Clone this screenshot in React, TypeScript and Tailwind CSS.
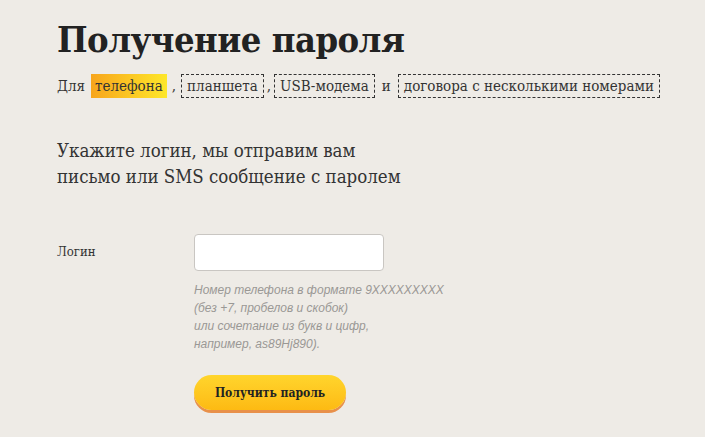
export default function App() {
  return (
    <div className="w-[705px] h-[437px] overflow-hidden bg-[#eeebe6] text-[#333] [font-family:'DejaVu_Serif_Condensed','DejaVu_Serif',serif]">
      <div className="pl-[57px] pt-[16px]">
        <h1 className="text-[36px] leading-[46px] font-bold text-[#222] tracking-[-0.5px]">Получение пароля</h1>

        <div className="mt-[12px] flex items-center text-[15px] text-[#333]">
          <span className="mr-[6px]">Для</span>
          <span className="h-[24px] px-[4px] flex items-center bg-gradient-to-r from-[#f7a51c] to-[#fde72a]">телефона</span>
          <span className="mx-[5px]">,</span>
          <span className="h-[24px] px-[5px] flex items-center border border-dashed border-[#333]">планшета</span>
          <span className="mx-[3px]">,</span>
          <span className="h-[24px] px-[5px] flex items-center border border-dashed border-[#333]">USB-модема</span>
          <span className="mx-[7px]">и</span>
          <span className="h-[24px] px-[5px] flex items-center border border-dashed border-[#333]">договора с несколькими номерами</span>
        </div>

        <p className="mt-[40px] text-[18.5px] leading-[26px] text-[#333]">
          Укажите логин, мы отправим вам
          <br />
          письмо или SMS сообщение с паролем
        </p>

        <div className="mt-[44px] flex">
          <label className="w-[137px] pt-[8px] text-[13px] text-[#333]">Логин</label>
          <div className="flex flex-col">
            <input className="w-[190px] h-[37px] bg-white border border-[#c9c6c2] rounded-[4px] outline-none px-2" />
            <div className="mt-[10px] text-[12px] leading-[18px] italic text-[#9a9895] [font-family:'Liberation_Sans',sans-serif]">
              Номер телефона в формате 9XXXXXXXXX
              <br />
              (без +7, пробелов и скобок)
              <br />
              или сочетание из букв и цифр,
              <br />
              например, as89Hj890).
            </div>
            <button className="mt-[22px] w-[152px] h-[35px] rounded-full bg-gradient-to-b from-[#ffd52c] to-[#fdba12] shadow-[0_3px_0_#e8904a] text-[12px] font-bold text-[#222]">
              Получить пароль
            </button>
          </div>
        </div>
      </div>
    </div>
  );
}
